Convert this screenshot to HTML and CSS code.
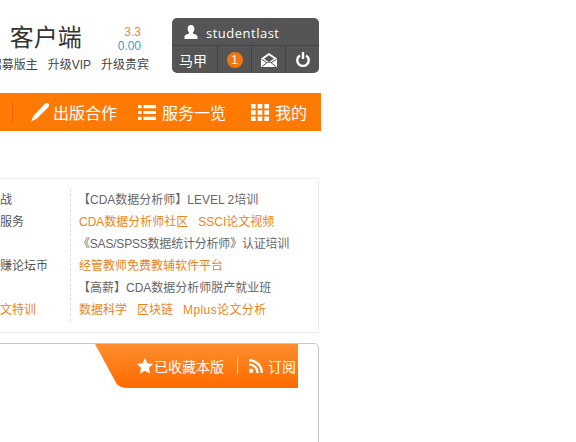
FILE: index.html
```html
<!DOCTYPE html>
<html lang="zh">
<head>
<meta charset="utf-8">
<title>客户端</title>
<link rel="stylesheet" href="styles.css">
</head>
<body>
<div class="page">
  <header class="top">
    <div class="brand">
      <div class="brand-main">
        <div class="client">客户端</div>
        <div class="scores"><span class="score-a">3.3</span><span class="score-b">0.00</span></div>
      </div>
      <div class="links"><span>招募版主</span><span>升级VIP</span><span>升级贵宾</span></div>
    </div>
    <div class="user">
      <div class="user-name">
        <svg class="icon-user" viewBox="0 0 14 14"><path fill="#fff" d="M7 0c2.200 0 3.400 1.600 3.400 3.800 0 1.500-.6 2.900-1.500 3.600v1.100c1.700.6 4.600 1.400 4.600 3.300v2.200H.5v-2.200c0-1.900 2.900-2.700 4.600-3.300V7.400C4.200 6.700 3.600 5.300 3.600 3.800 3.600 1.600 4.800 0 7 0z"/></svg>
        <span>studentlast</span>
      </div>
      <div class="user-tools">
        <div class="tool tool-text">马甲</div>
        <div class="tool"><span class="badge">1</span></div>
        <div class="tool">
          <svg class="icon-mail" viewBox="0 0 16 14"><path fill="#fff" d="M8 0l8 5.500V14H0V5.500z"/><path fill="none" stroke="#555" d="M.5 6.200L6 9.800M15.500 6.200L10 9.800M1 13.500l5.600-4.300h2.800l5.600 4.300"/><path fill="#555" d="M8 2.300L3 5.800l5 3.200 5-3.200z"/></svg>
        </div>
        <div class="tool">
          <svg class="icon-power" viewBox="0 0 14 15"><path fill="none" stroke="#fff" stroke-width="2.400" d="M4 3.400a5.700 5.700 0 1 0 6 0"/><path stroke="#fff" stroke-width="2.400" d="M7 0v7"/></svg>
        </div>
      </div>
    </div>
  </header>

  <nav class="nav">
    <span class="nav-sep"></span>
    <a class="nav-item nav-first">
      <svg class="icon-pen" viewBox="1 1 16 16"><path fill="#fff" d="M13.500 1.200c1-.9 2.400-.7 3.100.1.700.8.700 2-.1 2.800L6 14.500 1 17l2.200-5.200z"/></svg>
      <span>出版合作</span>
    </a>
    <a class="nav-item nav-second">
      <svg class="icon-list" viewBox="0 0 18 15"><path fill="#fff" d="M0 0h3.500v3.200H0zM5.500 0H18v3.200H5.500zM0 5.900h3.500v3.200H0zM5.500 5.900H18v3.200H5.500zM0 11.800h3.500V15H0zM5.500 11.800H18V15H5.500z"/></svg>
      <span>服务一览</span>
    </a>
    <a class="nav-item">
      <svg class="icon-grid" viewBox="0 0 18 17"><path fill="#fff" d="M0 0h4.600v4.600H0zM6.700 0h4.600v4.600H6.700zM13.400 0H18v4.600h-4.600zM0 6.200h4.600v4.600H0zM6.700 6.200h4.600v4.600H6.700zM13.400 6.200H18v4.600h-4.600zM0 12.400h4.600V17H0zM6.700 12.400h4.600V17H6.700zM13.400 12.400H18V17h-4.600z"/></svg>
      <span>我的</span>
    </a>
  </nav>

  <section class="ads">
    <ul class="ad-col ad-left">
      <li>战</li>
      <li>服务</li>
      <li>&nbsp;</li>
      <li>赚论坛币</li>
      <li>&nbsp;</li>
      <li class="hot">文特训</li>
    </ul>
    <ul class="ad-col ad-right">
      <li class="tight">【CDA数据分析师】LEVEL 2培训</li>
      <li class="hot"><span>CDA数据分析师社区</span><span>SSCI论文视频</span></li>
      <li class="tight narrow">《SAS/SPSS数据统计分析师》认证培训</li>
      <li class="hot">经管教师免费教辅软件平台</li>
      <li class="tight">【高薪】CDA数据分析师脱产就业班</li>
      <li class="hot"><span>数据科学</span><span>区块链</span><span class="wide">Mplus论文分析</span></li>
    </ul>
  </section>

  <section class="panel">
    <div class="ribbon">
      <svg class="icon-star" viewBox="0 0 16 16"><path fill="#fff" d="M8 0l2.400 5.200 5.600.7-4.100 3.900 1.100 5.700L8 12.700l-5 2.800 1.100-5.700L0 5.900l5.600-.7z"/></svg>
      <span>已收藏本版</span>
      <i class="ribbon-sep"></i>
      <svg class="icon-rss" viewBox="0 0 14 14"><circle fill="#fff" cx="2.200" cy="11.800" r="2.200"/><path fill="none" stroke="#fff" stroke-width="2.400" d="M0 5.400a8.600 8.600 0 0 1 8.600 8.600M0 1.200A12.800 12.800 0 0 1 12.800 14"/></svg>
      <span>订阅</span>
    </div>
  </section>
</div>
</body>
</html>
```
FILE: styles.css
```css
* { box-sizing: border-box; }
html, body { margin: 0; padding: 0; background: #fff; }
body { width: 576px; height: 442px; overflow: hidden; font-family: "Liberation Sans", "Noto Sans CJK SC", sans-serif; color: #444; }
.page { width: 319px; display: flex; flex-direction: column; align-items: stretch; }
ul { list-style: none; margin: 0; padding: 0; }

.top { height: 93px; padding-top: 18px; display: flex; justify-content: flex-end; gap: 22px; }
.brand { width: 180px; display: flex; flex-direction: column; align-items: flex-end; overflow: hidden; flex: none; }
.brand-main { display: flex; justify-content: flex-end; align-items: flex-start; width: 100%; padding-top: 7px; padding-right: 9px; height: 39px; }
.client { font-size: 24px; line-height: 28px; color: #333; margin-right: 36px; margin-top: -1px; }
.scores { display: flex; flex-direction: column; align-items: flex-end; font-size: 12px; line-height: 14px; }
.score-a { color: #e8873a; }
.score-b { color: #3a9fc8; }
.links { display: flex; justify-content: flex-end; gap: 10px; font-size: 12px; line-height: 16px; white-space: nowrap; padding-right: 1px; color: #444; }

.user { width: 147px; height: 55px; flex: none; background: #555; border-radius: 5px; color: #fff; display: flex; flex-direction: column; }
.user-name { height: 28px; display: flex; align-items: center; padding-left: 12px; gap: 8px; font-family: "Open Sans", sans-serif; font-size: 13px; letter-spacing: .5px; border-bottom: 1px solid #444; padding-top: 2px; }
.icon-user { width: 14px; height: 14px; margin-top: -2px; }
.user-tools { flex: 1; display: flex; }
.tool { width: 34px; display: flex; align-items: center; justify-content: center; border-left: 1px solid #444; }
.tool-text { width: 45px; border-left: 0; font-size: 14px; padding-right: 3px; }
.badge { width: 16px; height: 16px; border-radius: 50%; background: #f0750f; font-size: 12px; line-height: 16px; text-align: center; }
.icon-mail { width: 16px; height: 14px; }
.icon-power { width: 14px; height: 15px; }

.nav { height: 38px; margin-right: -2px; background: #ff7a05; color: #fff; display: flex; align-items: center; justify-content: flex-end; padding-right: 14px; font-size: 16px; }
.nav-sep { width: 1px; height: 22px; background: #e8680a; margin-right: 18px; }
.nav-item { display: flex; align-items: center; gap: 6px; margin-right: 25px; }
.nav-item:last-child { margin-right: 0; }
.nav-first { gap: 4px; margin-right: 21px; }
.icon-pen { width: 18px; height: 19px; }
.icon-list { width: 18px; height: 15px; }
.icon-grid { width: 18px; height: 17px; }

.ads { margin-top: 47px; height: 155px; border: 1px solid #eee; border-left: 0; display: flex; padding-top: 10px; }
.ad-col { font-size: 12px; line-height: 22px; }
.ad-left { width: 71px; height: 132px; border-right: 1px dashed #ddd; color: #555; white-space: nowrap; flex: none; }
.ad-right { padding-left: 8px; color: #666; white-space: nowrap; }
.hot { color: #ec8420; }
.hot span { margin-right: 10px; }
.tight { margin-left: -1px; }
.narrow { letter-spacing: -.2px; }
.wide { letter-spacing: .4px; }

.panel { margin-top: 10px; height: 100px; border: 1px solid #c4c8cc; border-left: 0; border-bottom: 0; border-radius: 0 5px 0 0; display: flex; justify-content: flex-end; padding-right: 20px; }
.ribbon { width: 203px; height: 44px; padding-right: 2px; background: linear-gradient(#ff8e2c, #ff6a00); color: #fff; font-size: 14px; clip-path: polygon(0 0, 100% 0, 100% 100%, 31px 100%, 26px 98%, 22px 92%); display: flex; align-items: center; justify-content: flex-end; }
.icon-star { width: 16px; height: 16px; margin-right: 1px; }
.ribbon-sep { width: 1px; height: 16px; background: #ffd9b0; margin: 0 11px 0 13px; }
.icon-rss { width: 14px; height: 14px; margin-right: 5px; }
```
